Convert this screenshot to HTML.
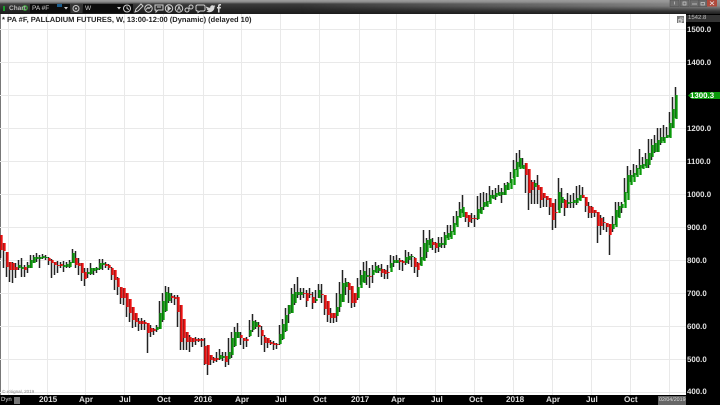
<!DOCTYPE html>
<html><head><meta charset="utf-8"><title>PA #F Chart</title>
<style>
html,body{margin:0;padding:0;background:#fff}
#w{position:relative;width:720px;height:405px;overflow:hidden;background:#fff;font-family:"Liberation Sans",sans-serif;text-rendering:geometricPrecision;filter:blur(.3px)}
#tb{position:absolute;left:0;top:0;width:720px;height:14px;background:linear-gradient(#a0a0a0 0,#8a8a8a 2px,#3c3c3c 4px,#2a2a2a 9px,#1c1c1c 14px)}
#tr{position:absolute;left:300px;top:0;width:420px;height:14px;background:linear-gradient(#9a9a9a 0,#888 6px,#6a6a6a 8px,#3a3a3a 11px,#1e1e1e 14px);-webkit-mask-image:linear-gradient(90deg,transparent 0,#000 100%);mask-image:linear-gradient(90deg,transparent 0,#000 100%)}
.t{position:absolute;white-space:nowrap}
.x{top:395px;font-size:8.200px;line-height:10px;font-weight:bold;color:#ddd}
.y{left:687px;font-size:7.900px;line-height:10px;font-weight:bold;color:#e2e2e2}
svg{position:absolute;left:0;top:0}
</style></head><body><div id="w">
<div id="tb"></div><div id="tr"></div>
<svg width="720" height="405" viewBox="0 0 720 405">
<rect x="0" y="14" width="1" height="381" fill="#777"/>
<g stroke="#e9e9e9" stroke-width="1" fill="none">
<path d="M0 29.5H686M0 62.5H686M0 95.5H686M0 128.5H686M0 161.5H686M0 194.5H686M0 227.5H686M0 260.5H686M0 293.5H686M0 326.5H686M0 359.5H686M0 392.5H686"/>
<path d="M8.5 14V395M47.5 14V395M85.5 14V395M124.5 14V395M163.5 14V395M203.5 14V395M241.5 14V395M280.5 14V395M319.5 14V395M359.5 14V395M396.5 14V395M435.5 14V395M474.5 14V395M513.5 14V395M552.5 14V395M591.5 14V395M630.5 14V395M669.5 14V395"/>
</g>
<path stroke="#222" stroke-width="1.500" fill="none" d="M0.5 235V258M3.5 243V268M6.5 252V277M9.5 262V282M12.5 262V283M15.5 263V278M18.5 260V270M21.5 258V277M24.5 265V277M27.5 262V273M30.5 255V268M33.5 255V263M36.5 253V262M39.5 255V268M42.5 254V259M45.5 255V260M48.5 257V265M51.5 259V278M54.5 262V275M57.5 261V273M60.5 262V268M63.5 261V272M66.5 262V268M69.5 260V268M72.5 249V263M75.5 251V268M78.5 258V275M81.5 263V281M84.5 268V286M87.5 268V278M90.5 263V275M93.5 268V275M96.5 267V273M99.5 259V270M102.5 259V270M105.5 262V268M108.5 264V270M111.5 267V280M114.5 270V290M117.5 277V295M120.5 287V304M123.5 288V305M126.5 293V317M129.5 299V322M132.5 307V328M135.5 313V327M138.5 318V331M141.5 318V330M144.5 320V330M147.5 323V353M150.5 325V337M153.5 328V335M156.5 325V332M159.5 301V329M162.5 293V322M165.5 286V312M168.5 287V303M171.5 293V303M174.5 295V305M177.5 295V327M180.5 305V350M183.5 319V350M186.5 332V350M189.5 335V352M192.5 338V347M195.5 337V345M198.5 338V342M201.5 338V347M204.5 338V365M207.5 345V375M210.5 355V365M213.5 357V363M216.5 352V362M219.5 349V360M222.5 352V361M225.5 352V367M228.5 338V365M231.5 332V358M234.5 327V347M237.5 323V338M240.5 332V345M243.5 338V349M246.5 337V347M249.5 320V337M252.5 314V332M255.5 320V329M258.5 322V337M261.5 326V345M264.5 335V352M267.5 338V348M270.5 340V345M273.5 341V350M276.5 343V349M279.5 325V345M282.5 319V340M285.5 308V332M288.5 305V323M291.5 288V313M294.5 284V305M297.5 277V298M300.5 288V300M303.5 288V298M306.5 290V307M309.5 288V298M312.5 292V309M315.5 290V303M318.5 284V298M321.5 284V303M324.5 295V315M327.5 301V322M330.5 308V323M333.5 313V323M336.5 293V322M339.5 282V312M342.5 270V302M345.5 278V295M348.5 282V303M351.5 286V308M354.5 293V307M357.5 278V300M360.5 270V285M363.5 262V282M366.5 261V285M369.5 268V288M372.5 265V283M375.5 262V272M378.5 265V273M381.5 264V277M384.5 269V279M387.5 265V279M390.5 255V268M393.5 256V267M396.5 255V263M399.5 258V270M402.5 260V271M405.5 250V265M408.5 252V264M411.5 254V267M414.5 257V273M417.5 262V277M420.5 247V265M423.5 230V260M426.5 238V258M429.5 230V245M432.5 238V250M435.5 242V253M438.5 237V252M441.5 237V248M444.5 232V248M447.5 225V238M450.5 225V237M453.5 216V232M456.5 211V225M459.5 202V217M462.5 195V213M465.5 212V222M468.5 215V227M471.5 213V223M474.5 215V227M477.5 196V220M480.5 193V213M483.5 192V210M486.5 193V206M489.5 186V202M492.5 190V198M495.5 188V200M498.5 185V195M501.5 188V203M504.5 183V195M507.5 182V190M510.5 172V183M513.5 160V178M516.5 153V170M519.5 150V167M522.5 158V168M525.5 163V193M528.5 169V210M531.5 180V204M534.5 180V204M537.5 175V204M540.5 187V208M543.5 193V207M546.5 196V207M549.5 198V215M552.5 203V230M555.5 199V228M558.5 178V210M561.5 188V208M564.5 199V216M567.5 193V208M570.5 195V208M573.5 193V208M576.5 186V205M579.5 185V200M582.5 187V198M585.5 197V212M588.5 202V218M591.5 206V218M594.5 210V217M597.5 212V243M600.5 215V235M603.5 217V230M606.5 223V232M609.5 224V255M612.5 216V232M615.5 202V225M618.5 202V217M621.5 202V213M624.5 178V202M627.5 166V193M630.5 170V182M633.5 164V177M636.5 165V175M639.5 149V169M642.5 157V168M645.5 153V166M648.5 139V168M651.5 139V160M654.5 135V153M657.5 128V152M660.5 128V145M663.5 125V141M666.5 127V138M669.5 112V137M672.5 97V128M675.5 87V118"/>
<path stroke="#0a9a0a" stroke-width="2.300" fill="none" d="M19.5 265V268M22.5 267V269M28.5 265V268M31.5 260V268M34.5 257V263M37.5 257V259M40.5 257V259M43.5 256V258M46.5 257V258M64.5 265V267M67.5 264V267M70.5 262V267M73.5 253V263M88.5 272V274M91.5 268V274M94.5 268V271M97.5 268V270M100.5 263V269M103.5 263V265M157.5 327V330M160.5 313V329M163.5 301V320M166.5 292V311M169.5 293V301M220.5 355V359M223.5 356V358M229.5 352V359M232.5 338V355M235.5 332V346M238.5 332V338M250.5 330V336M253.5 321V330M256.5 322V327M280.5 334V344M283.5 324V339M286.5 315V331M289.5 305V314M292.5 294V313M295.5 292V303M298.5 292V295M301.5 292V295M316.5 299V301M319.5 290V298M337.5 307V316M340.5 294V307M343.5 283V302M346.5 282V287M358.5 287V298M361.5 275V288M364.5 271V283M367.5 275V277M373.5 270V275M376.5 266V273M379.5 268V271M391.5 263V272M394.5 260V263M397.5 260V263M406.5 257V263M409.5 256V260M412.5 256V257M421.5 257V266M424.5 243V261M427.5 240V252M430.5 239V248M439.5 243V247M442.5 243V245M445.5 235V245M448.5 233V240M451.5 231V239M454.5 223V235M457.5 216V227M460.5 209V218M463.5 207V217M478.5 209V219M481.5 207V214M484.5 202V207M487.5 201V207M490.5 195V204M493.5 195V199M496.5 193V197M499.5 192V196M502.5 192V195M505.5 185V195M508.5 183V190M511.5 179V189M514.5 169V185M517.5 162V177M520.5 158V169M523.5 165V169M535.5 183V187M559.5 192V213M562.5 197V203M568.5 202V204M571.5 202V203M574.5 200V203M577.5 198V203M580.5 195V201M613.5 224V229M616.5 210V227M619.5 206V218M622.5 204V208M625.5 192V208M628.5 175V200M631.5 175V185M634.5 173V182M637.5 168V177M640.5 165V175M643.5 164V169M646.5 159V168M649.5 153V165M652.5 145V157M655.5 143V152M658.5 140V152M661.5 137V143M664.5 137V143M667.5 135V138M670.5 123V138M673.5 109V128M676.5 95V119"/>
<path stroke="#ee1111" stroke-width="2.300" fill="none" d="M1.5 235V250M4.5 243V251M7.5 252V267M10.5 262V270M13.5 263V270M16.5 267V270M25.5 267V270M49.5 258V261M52.5 260V263M55.5 262V265M58.5 265V266M61.5 264V266M76.5 258V265M79.5 263V266M82.5 263V273M85.5 272V279M106.5 264V266M109.5 265V268M112.5 268V275M115.5 270V280M118.5 278V287M121.5 287V298M124.5 288V298M127.5 293V307M130.5 299V313M133.5 307V320M136.5 313V322M139.5 321V324M142.5 321V324M145.5 322V324M148.5 323V333M151.5 328V332M154.5 329V331M172.5 296V298M175.5 297V299M178.5 297V312M181.5 305V342M184.5 319V338M187.5 332V342M190.5 337V342M193.5 338V342M196.5 339V341M199.5 339V341M202.5 339V341M205.5 346V364M208.5 345V365M211.5 355V360M214.5 358V361M217.5 358V360M226.5 356V362M241.5 335V338M244.5 338V341M247.5 339V341M259.5 325V327M262.5 330V336M265.5 337V343M268.5 338V343M271.5 342V344M274.5 343V345M277.5 344V345M304.5 293V294M307.5 293V301M310.5 294V295M313.5 297V303M322.5 294V295M325.5 295V309M328.5 301V315M331.5 313V318M334.5 313V318M349.5 283V290M352.5 286V303M355.5 293V303M370.5 276V277M382.5 269V273M385.5 270V274M388.5 272V273M400.5 260V262M403.5 261V263M415.5 258V267M418.5 263V270M433.5 242V245M436.5 243V248M466.5 212V218M469.5 215V222M472.5 218V219M475.5 218V219M526.5 163V175M529.5 169V193M532.5 182V190M538.5 185V190M541.5 187V200M544.5 193V198M547.5 196V200M550.5 198V207M553.5 203V220M556.5 212V213M565.5 200V208M583.5 195V198M586.5 197V206M589.5 206V213M592.5 207V213M595.5 210V213M598.5 212V226M601.5 218V226M604.5 222V223M607.5 223V227M610.5 224V235"/>
<rect x="686" y="14" width="34" height="391" fill="#000"/>
<rect x="0" y="395" width="686" height="10" fill="#000"/>
<rect x="658" y="396" width="28" height="9" fill="#666"/>
<rect x="686" y="15" width="34" height="7" fill="#333"/>
<rect x="677" y="16" width="7" height="7" fill="#777"/>
<path d="M680 18h3v3h-3zM678.500 19.500h3v3h-3z" fill="none" stroke="#ddd" stroke-width=".7"/>
<path d="M688 95.500L692 92H720V99H692Z" fill="#0a9a0a"/>
<!-- toolbar -->
<rect x="3" y="6" width="2" height="5" fill="#1a9a2a"/>
<circle cx="25" cy="8" r="2.200" fill="none" stroke="#3aa63a" stroke-width="1.300"/>
<rect x="30" y="4" width="40" height="9" fill="#0c0c0c"/>
<rect x="57" y="4" width="5" height="3" fill="#1b5c8c"/>
<path d="M64 7h4l-2 2.500z" fill="#ccc"/>
<rect x="71" y="4" width="11" height="9" fill="#333"/>
<circle cx="76" cy="8.500" r="3" fill="none" stroke="#ccc"/><circle cx="76" cy="8.500" r="1" fill="#ccc"/>
<rect x="83" y="4" width="39" height="9" fill="#0c0c0c"/>
<path d="M117 7h4l-2 2.500z" fill="#ccc"/>
<rect x="122" y="4" width="11" height="9" fill="#0c0c0c"/>
<g fill="none" stroke="#cfcfcf" stroke-width="1">
<circle cx="127" cy="8.500" r="3.500"/><path d="M127 6.500V8.500L129 9.500"/>
<path d="M135 12l1-3 5-5 2 2-5 5z"/>
<circle cx="148.500" cy="8.500" r="3.700"/><path d="M146 9.500l2-2 1 1 2-2"/>
<path d="M155 5h8v5h-5l-2 2v-2h-1z"/><path d="M157 7h4"/>
<circle cx="169" cy="8.500" r="3.700"/><path d="M168 6.500l2.500 2-2.500 2z" fill="#cfcfcf"/>
<circle cx="179" cy="8.500" r="3.700"/><path d="M177.500 10.500l1.500-4 1.500 4"/>
<circle cx="187" cy="10" r="2"/><circle cx="191" cy="7" r="2"/>
<path d="M197 5h7l1 1v4l-1 1h-4l-2 1.500V11h-1l-1-1V6z"/>
</g>
<path transform="translate(205.500 3.500) scale(.62)" d="M1 4.500c2 1.500 4 2.300 6.500 2.400C7.200 3.500 11 1.500 13.300 3.600l2.200-.8-1.200 2 1.700-.4-1.500 1.700c0 4.500-3.500 8-8.500 8-2 0-3.800-.5-5.300-1.500 1.800.1 3.300-.3 4.500-1.300-1.700-.1-2.800-1-3.300-2.300h1.500C1.900 8.400.8 7 .8 5.300l1.400.4C1 4.900.6 4 1 2.800z" fill="#d8d8d8"/>
<path d="M218 12.500V8.500h-1V7h1V5.800c0-1 .6-1.800 2-1.800h1v1.500h-.8c-.5 0-.7.200-.7.700V7H221l-.2 1.500h-1.300v4z" fill="#d8d8d8"/>
<!-- window buttons -->
<g fill="#6e6e6e" stroke="#4a4a4a" stroke-width=".5"><rect x="670" y="0" width="9" height="6.500"/><rect x="680" y="0" width="9" height="6.500"/><rect x="690" y="0" width="9" height="6.500"/><rect x="699" y="0" width="8" height="6.500"/></g>
<path d="M674.500 1.500v3M683 2h3v3h-3zM692 4h5M701 2.500h3.500v2.500h-3.500z" stroke="#ccc" stroke-width=".7" fill="none"/>
<rect x="707" y="0" width="10" height="6.500" fill="#b04a3c"/>
<path d="M710 1.500l4 3.500M714 1.500l-4 3.500" stroke="#eee" stroke-width=".8"/>
<rect x="14" y="397" width="6" height="7" fill="#777"/>
</svg>
<div class="t" style="left:2px;top:15px;font-size:7.500px;line-height:10px;font-weight:bold;color:#222">* PA #F, PALLADIUM FUTURES, W, 13:00-12:00 (Dynamic) (delayed 10)</div>
<div class="t" style="left:9px;top:4px;font-size:6.500px;line-height:9px;color:#bbb;font-weight:bold">Chart</div>
<div class="t" style="left:32px;top:4px;font-size:6.500px;line-height:9px;color:#ccc">PA #F</div>
<div class="t" style="left:85px;top:4px;font-size:6.500px;line-height:9px;color:#ccc">W</div>
<div class="t" style="left:2px;top:389px;font-size:4.500px;line-height:6px;color:#888">© eSignal, 2019</div>
<div class="t" style="left:1px;top:396px;font-size:6px;line-height:9px;color:#ddd">Dyn</div>
<div class="t x" style="left:39px">2015</div>
<div class="t x" style="left:79px">Apr</div>
<div class="t x" style="left:119px">Jul</div>
<div class="t x" style="left:157px">Oct</div>
<div class="t x" style="left:194px">2016</div>
<div class="t x" style="left:235px">Apr</div>
<div class="t x" style="left:275px">Jul</div>
<div class="t x" style="left:313px">Oct</div>
<div class="t x" style="left:351px">2017</div>
<div class="t x" style="left:391px">Apr</div>
<div class="t x" style="left:431px">Jul</div>
<div class="t x" style="left:469px">Oct</div>
<div class="t x" style="left:506px">2018</div>
<div class="t x" style="left:546px">Apr</div>
<div class="t x" style="left:586px">Jul</div>
<div class="t x" style="left:624px">Oct</div>
<div class="t" style="left:659px;top:397px;font-size:5.300px;line-height:7px;color:#ddd">02/04/2019</div>
<div class="t" style="left:688px;top:15px;font-size:6px;line-height:7px;color:#bbb">1542.8</div>
<div class="t y" style="top:25px">1500.0</div>
<div class="t y" style="top:58px">1400.0</div>
<div class="t y" style="left:690px;top:91px;color:#fff">1300.3</div>
<div class="t y" style="top:124px">1200.0</div>
<div class="t y" style="top:157px">1100.0</div>
<div class="t y" style="top:190px">1000.0</div>
<div class="t y" style="top:223px">900.0</div>
<div class="t y" style="top:256px">800.0</div>
<div class="t y" style="top:289px">700.0</div>
<div class="t y" style="top:322px">600.0</div>
<div class="t y" style="top:355px">500.0</div>
<div class="t y" style="top:387px">400.0</div>
</div></body></html>
